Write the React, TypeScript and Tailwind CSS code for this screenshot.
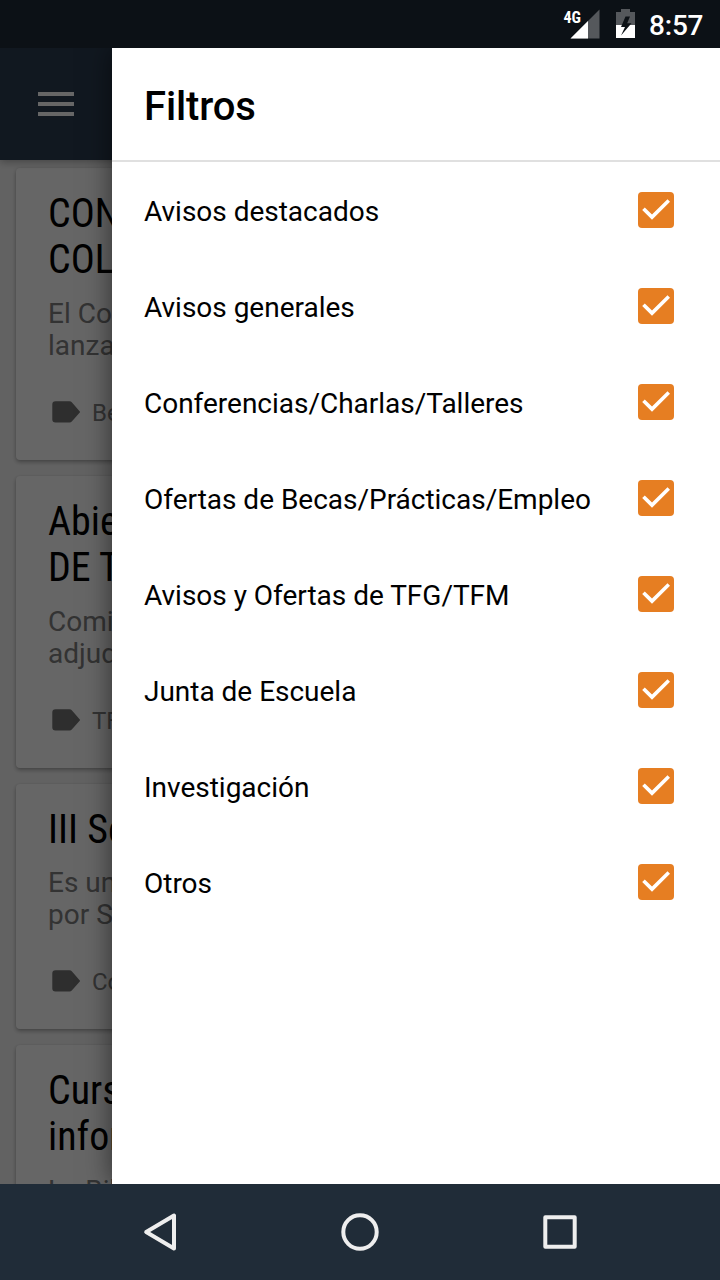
import React from "react";

const filters = [
  "Avisos destacados",
  "Avisos generales",
  "Conferencias/Charlas/Talleres",
  "Ofertas de Becas/Prácticas/Empleo",
  "Avisos y Ofertas de TFG/TFM",
  "Junta de Escuela",
  "Investigación",
  "Otros",
];

interface Notice {
  title: string[];
  body: string[];
  tag: string;
}

const notices: Notice[] = [
  { title: ["CON", "COL"], body: ["El Co", "lanza"], tag: "Be" },
  { title: ["Abie", "DE T"], body: ["Comi", "adjud"], tag: "TF" },
  { title: ["III Se"], body: ["Es un", "por S"], tag: "Co" },
  { title: ["Curs", "infor"], body: ["La Bib", ""], tag: "" },
];

function StatusBar() {
  return (
    <div className="flex h-12 shrink-0 items-center justify-end bg-[#0c1116] pr-4 text-white">
      <svg className="mr-4 h-12 w-10 shrink-0" viewBox="560 0 40 48">
        <path d="M599.5 9.500V38.500H570.500Z" fill="#55585c" />
        <path d="M588 21V38.500H570.500Z" fill="#fff" />
        <text x="563.500" y="22.700" fill="#fff" fontSize="16.500" fontWeight="700" textLength="17.500" lengthAdjust="spacingAndGlyphs" className="[font-family:'Roboto_Condensed',Roboto,sans-serif] [font-stretch:75%]">4G</text>
      </svg>
      <svg className="mr-[13px] h-12 w-5 shrink-0" viewBox="616 0 20 48">
        <path d="M616 12h5V9h9v3h5v13h-19Z" fill="#55585c" />
        <path d="M616 25h19v13h-19Z" fill="#fff" />
        <path d="M630 16.500H625.500L621 27H625L621 35.500L631.500 23.200H627.200Z" fill="#0c1116" />
      </svg>
      <span className="w-[55px] pt-[3px] text-[28px] leading-none font-medium tracking-[-0.2px] whitespace-nowrap">8:57</span>
    </div>
  );
}

function NoticeCard({ title, body, tag }: Notice) {
  return (
    <article className="shrink-0 rounded-[4px] bg-white px-8 pt-[23px] pb-8 shadow-[0_2px_4px_rgba(0,0,0,0.32),0_0_2px_rgba(0,0,0,0.06)]">
      <h2 className="-mb-px text-[40px] leading-[46px] font-normal whitespace-nowrap text-black [font-family:'Roboto_Condensed',Roboto,sans-serif] [font-stretch:75%]">
        {title.map((line) => (
          <span key={line} className="block not-first:pb-px">{line}</span>
        ))}
      </h2>
      <div className="mt-[15px] text-[28px] leading-8 whitespace-nowrap text-[#808080]">
        {body.map((line) => (
          <p key={line}>{line}</p>
        ))}
      </div>
      <div className="mt-[34px] flex h-8 items-center text-2xl text-[#808080]">
        <svg className="mr-3 h-8 w-8" viewBox="0 0 32 32">
          <path d="M7.500 5.300H21.500Q23 5.300 24 6.600L32.300 16L24 25.200Q23 26.500 21.500 26.500H7.500Q4.300 26.500 4.300 23.500V8.300Q4.300 5.300 7.500 5.300Z" fill="#737373" />
        </svg>
        <span className="pt-0.5">{tag}</span>
      </div>
    </article>
  );
}

function NoticeFeed() {
  return (
    <main className="flex h-full w-full flex-col bg-[#f6f6f6]">
      <header className="relative flex h-28 shrink-0 items-center bg-[#2c3e50] pl-[38px] shadow-[0_2px_8px_rgba(0,0,0,0.3)]">
        <div className="flex w-9 flex-col gap-1.5">
          <span className="h-1 bg-white" />
          <span className="h-1 bg-white" />
          <span className="h-1 bg-white" />
        </div>
      </header>
      <section className="flex flex-col gap-4 px-4 pt-2">
        {notices.map((notice) => (
          <NoticeCard key={notice.tag} {...notice} />
        ))}
      </section>
    </main>
  );
}

function FilterDrawer() {
  return (
    <aside className="absolute inset-y-0 right-0 flex w-[608px] flex-col bg-white text-black shadow-[0_0_26px_rgba(0,0,0,0.55)]">
      <div className="flex h-[114px] shrink-0 items-center border-b-2 border-[#e0e0e0] pt-[5px] pl-8">
        <h1 className="text-[40px] leading-none font-medium tracking-[-0.15px]">Filtros</h1>
      </div>
      <ul>
        {filters.map((name) => (
          <li key={name} className="flex h-24 items-center justify-between pr-[46px] pl-8">
            <span className="pt-[3px] text-[28px] leading-8 tracking-[-0.015px]">{name}</span>
            <svg className="h-9 w-9" viewBox="0 0 36 36">
              <rect width="36" height="36" rx="4" fill="#e67e22" />
              <path d="M4.200 18L6.800 15.400L14 22.500L29.500 7.200L32 9.800L14 27.800Z" fill="#fff" />
            </svg>
          </li>
        ))}
      </ul>
    </aside>
  );
}

function NavigationBar() {
  return (
    <nav className="flex h-24 shrink-0 items-center justify-center gap-[152px] bg-[#202c38]">
      <svg className="h-12 w-12" viewBox="0 0 48 48" fill="none" stroke="#eee" strokeWidth="4" strokeLinejoin="round">
        <path d="M10.200 24L38 7.500V40.500Z" />
      </svg>
      <svg className="h-12 w-12" viewBox="0 0 48 48" fill="none" stroke="#eee" strokeWidth="4">
        <circle cx="24" cy="24" r="16.700" />
      </svg>
      <svg className="h-12 w-12" viewBox="0 0 48 48" fill="none" stroke="#eee" strokeWidth="4" strokeLinejoin="round">
        <rect x="9.300" y="9.300" width="29.400" height="29.400" />
      </svg>
    </nav>
  );
}

export default function App() {
  return (
    <div className="flex h-[1280px] w-[720px] flex-col overflow-hidden font-[Roboto,sans-serif]">
      <StatusBar />
      <div className="relative min-h-0 flex-1 overflow-hidden">
        <NoticeFeed />
        <div className="absolute inset-0 bg-black/60" />
        <FilterDrawer />
      </div>
      <NavigationBar />
    </div>
  );
}
